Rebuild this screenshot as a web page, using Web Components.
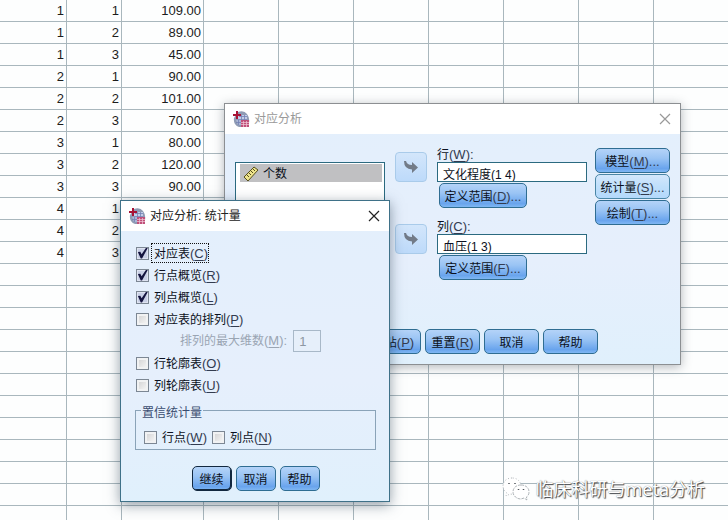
<!DOCTYPE html>
<html lang="zh-CN">
<head>
<meta charset="utf-8">
<meta name="viewport" content="width=device-width, initial-scale=1">
<title>对应分析</title>
<style>
    html, body {
        margin: 0;
        height: 100%;
        overflow: hidden;
    }
    body {
        position: relative;
        background: #fdfefe;
        color: #0b1020;
        font: 12px/14px "Liberation Sans", "Noto Sans CJK SC", sans-serif;
    }
    #main-dialog {
        position: absolute;
        left: 224px;
        top: 103px;
        width: 457px;
    }
    #stats-dialog {
        position: absolute;
        left: 120px;
        top: 200px;
        width: 270px;
    }
    page-credit {
        position: absolute;
        right: 23px;
        bottom: 18px;
    }
</style>
</head>
<body>
<data-sheet></data-sheet>

<app-dialog id="main-dialog" heading="对应分析" inactive>
    <analysis-form></analysis-form>
</app-dialog>

<app-dialog id="stats-dialog" heading="对应分析: 统计量">
    <statistics-form></statistics-form>
</app-dialog>

<page-credit>临床科研与meta分析</page-credit>

<script>
// "(C)" with the shortcut letter underlined
const accessKey = (key, tail = '') =>
    key ? `<span class="key">(<u>${key}</u>)${tail}</span>` : '';

const BASE = `
    *, *::before { box-sizing: border-box; }
    .key { font-size: 13px; color: #333c50; }
    .key u { text-decoration: underline; text-underline-offset: 2px; }
`;

class DataSheet extends HTMLElement {
    constructor() {
        super();
        this.attachShadow({ mode: 'open' });
    }

    connectedCallback() {
        const counts = [109, 89, 45, 90, 101, 70, 80, 120, 90];
        const filledRows = 12;
        const emptyCols = 8;
        let rows = '';

        for (let i = 0; i < 24; i++) {
            let cells = ['', '', ''];
            if (i < filledRows) {
                const count = i < counts.length ? counts[i].toFixed(2) : '';
                cells = [Math.floor(i / 3) + 1, i % 3 + 1, count];
            }
            rows += '<tr>' + cells.map(c => `<td>${c}</td>`).join('') + '<td></td>'.repeat(emptyCols) + '</tr>';
        }

        this.shadowRoot.innerHTML = `
            <style>
                :host { display: block; height: 100%; overflow: hidden; }
                table {
                    table-layout: fixed;
                    width: 804px;
                    min-width: 100%;
                    border-collapse: separate;
                    border-spacing: 0;
                    font-size: 13px;
                    color: #1c1c1c;
                }
                td {
                    box-sizing: border-box;
                    height: 22px;
                    padding: 1px 2px 0 0;
                    border-right: 1px solid #a9b7bd;
                    border-bottom: 1px solid #a9b7bd;
                    text-align: right;
                }
            </style>
            <table>
                <colgroup>
                    <col style="width: 67px"><col style="width: 55px"><col style="width: 82px">
                    <col span="${emptyCols}" style="width: 75px">
                </colgroup>
                <tbody>${rows}</tbody>
            </table>
        `;
    }
}
customElements.define('data-sheet', DataSheet);

class AppDialog extends HTMLElement {
    constructor() {
        super();
        this.attachShadow({ mode: 'open' });
    }

    connectedCallback() {
        this.shadowRoot.innerHTML = `
            <style>
                ${BASE}
                :host {
                    display: block;
                    box-sizing: border-box;
                    border: 1px solid #3f7188;
                    background: linear-gradient(#e3effc, #e6effc 60%, #e0f0fc);
                    box-shadow: 0 3px 12px rgba(40, 60, 80, .5);
                }
                :host([inactive]) {
                    border-color: #8c8f92;
                    box-shadow: 0 2px 10px rgba(40, 50, 60, .35);
                }
                header {
                    display: flex;
                    align-items: center;
                    gap: 4px;
                    height: 30px;
                    padding: 0 8px;
                    background: #fff;
                    color: #222;
                }
                :host([inactive]) header { color: #999; }
                h1 { flex: 1; margin: 0; font-size: 12px; font-weight: normal; }
                .logo { width: 17px; height: 17px; }
                button {
                    width: 14px;
                    height: 14px;
                    padding: 0;
                    border: 0;
                    background: none;
                    color: inherit;
                }
                button svg { display: block; }
            </style>
            <header>
                <svg class="logo" viewBox="0 0 17 17">
                    <path d="M5 1Q11-1 14 3Q17 7 16 12L15 16H6Q0 14 1 7Z" fill="#8f9bb4"/>
                    <path d="M5 4H14V10H5Z" fill="#c3cde8"/>
                    <path d="M3 9H8V14H5Z" fill="#a9b5d6"/>
                    <path d="M6 5.500H14M6 8.500H14M3 11.500H8M8.500 4V10M11.500 4V9M5.500 8V14" stroke="#7482b4" stroke-width=".8" fill="none"/>
                    <path d="M8 9H16V16H8Z" fill="#c0507a"/>
                    <path d="M8 11.500H16M8 13.500H16M10.500 10V16M13.500 10V16" stroke="#f0c7d7" stroke-width=".7"/>
                    <path d="M4 0V8M0 4H8" stroke="#a81335" stroke-width="2"/>
                </svg>
                <h1>${this.getAttribute('heading')}</h1>
                <button type="button" aria-label="关闭">
                    <svg width="14" height="14" viewBox="0 0 14 14">
                        <path d="M2 2L12 12M12 2L2 12" stroke="currentColor" stroke-width="1.200"/>
                    </svg>
                </button>
            </header>
            <slot></slot>
        `;
    }
}
customElements.define('app-dialog', AppDialog);

class PushButton extends HTMLElement {
    constructor() {
        super();
        this.attachShadow({ mode: 'open' });
    }

    connectedCallback() {
        const key = this.getAttribute('key');
        const tail = this.hasAttribute('more') ? '...' : '';
        this.shadowRoot.innerHTML = `
            <style>
                ${BASE}
                :host { display: block; }
                button {
                    width: 100%;
                    height: 25px;
                    padding: 2px 0 0;
                    border: 1px solid #2f6d92;
                    border-radius: 5px;
                    background: linear-gradient(#b4d3f8, #9ac4f4 40%, #69a4ed 85%, #7fb7f3);
                    color: inherit;
                    font: inherit;
                    white-space: nowrap;
                }
                :host([hot]) button {
                    background: linear-gradient(#d3e7fc, #bfdffb 50%, #b4d9fb);
                    border-color: #4a86a6;
                }
                :host([primary]) button {
                    border-color: #12283f;
                    box-shadow: inset -1px -1px #12283f;
                }
            </style>
            <button type="button"><slot></slot>${accessKey(key, tail)}</button>
        `;
    }
}
customElements.define('push-button', PushButton);

class MoveButton extends HTMLElement {
    constructor() {
        super();
        this.attachShadow({ mode: 'open' });
        this.shadowRoot.innerHTML = `
            <style>
                :host { display: block; }
                button {
                    display: grid;
                    place-items: center;
                    box-sizing: border-box;
                    width: 32px;
                    height: 30px;
                    padding: 0;
                    border: 1px solid #a9cbea;
                    border-radius: 4px;
                    background: linear-gradient(#d3e6fb, #bddafa);
                }
            </style>
            <button type="button" disabled aria-label="移动">
                <svg width="16" height="14" viewBox="0 0 16 14">
                    <path d="M1 1H3Q4 5 9 5V2L15 7.500L9 13V9.500Q1 9 1 1Z" fill="#727b88"/>
                </svg>
            </button>
        `;
    }
}
customElements.define('move-button', MoveButton);

class CheckBox extends HTMLElement {
    constructor() {
        super();
        this.attachShadow({ mode: 'open' });
    }

    connectedCallback() {
        const checked = this.hasAttribute('checked') ? 'checked' : '';
        this.shadowRoot.innerHTML = `
            <style>
                ${BASE}
                :host { display: block; }
                label { display: flex; align-items: center; gap: 2px; height: 22px; }
                input {
                    appearance: none;
                    width: 13px;
                    height: 13px;
                    margin: 0;
                    border: 1px solid #7c8794;
                    background: linear-gradient(135deg, #cfcfd0, #fafafa);
                    box-shadow: inset 0 0 0 2px #f1f2f3;
                }
                input:checked {
                    background: #c9d0e6;
                    box-shadow: inset 0 0 0 1px #dfe4f2;
                }
                input:checked::before {
                    content: "";
                    display: block;
                    width: 11px;
                    height: 11px;
                    background: #14143f;
                    clip-path: polygon(8% 42%, 30% 38%, 42% 62%, 84% 0, 100% 0, 46% 100%, 34% 100%);
                }
                .text { padding: 3px 0 1px 2px; border: 1px dotted transparent; }
                :host([focused]) .text { border-color: #111; }
            </style>
            <label>
                <input type="checkbox" ${checked}>
                <span class="text"><slot></slot>${accessKey(this.getAttribute('key'))}</span>
            </label>
        `;
    }
}
customElements.define('check-box', CheckBox);

class RangeField extends HTMLElement {
    constructor() {
        super();
        this.attachShadow({ mode: 'open' });
    }

    connectedCallback() {
        this.shadowRoot.innerHTML = `
            <style>
                ${BASE}
                :host { display: block; }
                label { display: block; height: 14px; }
                input {
                    display: block;
                    width: 100%;
                    height: 20px;
                    margin: 0 0 1px;
                    padding: 2px 5px 0;
                    border: 1px solid #2b6a80;
                    border-radius: 0;
                    background: #fff;
                    color: inherit;
                    font: inherit;
                }
                push-button { width: 88px; margin-left: 2px; }
            </style>
            <label for="value">${this.getAttribute('label')}${accessKey(this.getAttribute('key'), ':')}</label>
            <input id="value" type="text" readonly value="${this.getAttribute('value')}">
            <push-button key="${this.getAttribute('define-key')}" more>定义范围</push-button>
        `;
    }
}
customElements.define('range-field', RangeField);

class VariableList extends HTMLElement {
    constructor() {
        super();
        this.attachShadow({ mode: 'open' });
        this.shadowRoot.innerHTML = `
            <style>
                :host {
                    display: block;
                    box-sizing: border-box;
                    padding: 1px 2px 1px 4px;
                    border: 1px solid #2b6a80;
                    background: #fff;
                }
                ul { margin: 0; padding: 0; list-style: none; }
                li {
                    display: flex;
                    align-items: center;
                    gap: 4px;
                    height: 18px;
                    padding: 2px 3px 0;
                    box-sizing: border-box;
                    background: #c0c0c2;
                }
            </style>
            <ul>
                <li>
                    <svg width="16" height="16" viewBox="0 0 16 16">
                        <path d="M1 11L11 1L15 4L5 15Z" fill="#eee48c" stroke="#57501c"/>
                        <path d="M4 9L6 11M6 7L8 9M8 5L10 7M10 3L12 5" stroke="#57501c" fill="none"/>
                    </svg>
                    <slot></slot>
                </li>
            </ul>
        `;
    }
}
customElements.define('variable-list', VariableList);

class AnalysisForm extends HTMLElement {
    constructor() {
        super();
        this.attachShadow({ mode: 'open' });
        this.shadowRoot.innerHTML = `
            <style>
                :host { display: block; padding: 14px 10px 10px; }
                .main {
                    display: grid;
                    grid-template-columns: 150px 34px 1fr 75px;
                    column-gap: 8px;
                }
                variable-list { margin-top: 14px; }
                .moves { display: grid; justify-items: end; align-content: start; gap: 42px; padding-top: 4px; }
                .fields { display: grid; gap: 12px; padding-left: 2px; }
                .side { display: grid; align-content: start; gap: 1px; }
                footer { display: flex; justify-content: center; gap: 4px; margin-top: 49px; }
                footer push-button { width: 55px; }
            </style>
            <div class="main">
                <variable-list>个数</variable-list>
                <div class="moves">
                    <move-button></move-button>
                    <move-button></move-button>
                </div>
                <div class="fields">
                    <range-field label="行" key="W" value="文化程度(1 4)" define-key="D"></range-field>
                    <range-field label="列" key="C" value="血压(1 3)" define-key="F"></range-field>
                </div>
                <div class="side">
                    <push-button key="M" more>模型</push-button>
                    <push-button key="S" more hot>统计量</push-button>
                    <push-button key="T" more>绘制</push-button>
                </div>
            </div>
            <footer>
                <push-button>确定</push-button>
                <push-button key="P">粘贴</push-button>
                <push-button key="R">重置</push-button>
                <push-button>取消</push-button>
                <push-button>帮助</push-button>
            </footer>
        `;
    }
}
customElements.define('analysis-form', AnalysisForm);

class StatisticsForm extends HTMLElement {
    constructor() {
        super();
        this.attachShadow({ mode: 'open' });
        this.shadowRoot.innerHTML = `
            <style>
                ${BASE}
                :host { display: block; padding: 11px 13px 10px 14px; }
                .options { padding-left: 1px; }
                .dimension {
                    display: flex;
                    align-items: center;
                    gap: 6px;
                    height: 22px;
                    padding-left: 44px;
                    color: #9aa5b3;
                }
                .dimension .key { color: inherit; }
                .dimension input {
                    width: 28px;
                    height: 22px;
                    padding: 1px 5px 0;
                    border: 1px solid #a8b8c8;
                    background: #e6effa;
                    color: #8d97a3;
                    font: inherit;
                    font-size: 13px;
                }
                fieldset {
                    display: flex;
                    gap: 4px;
                    margin: 5px 0 0;
                    padding: 6px 8px 1px;
                    border: 1px solid #8aa3b8;
                }
                legend { padding: 5px 1px 0; margin-left: -3px; color: #3b4d70; }
                footer { display: flex; justify-content: center; gap: 4px; margin-top: 16px; }
                footer push-button { width: 40px; }
            </style>
            <div class="options">
                <check-box key="C" checked focused>对应表</check-box>
                <check-box key="R" checked>行点概览</check-box>
                <check-box key="L" checked>列点概览</check-box>
                <check-box key="P">对应表的排列</check-box>
                <div class="dimension">
                    <label for="dims">排列的最大维数${accessKey('M', ':')}</label>
                    <input id="dims" type="text" value="1" disabled>
                </div>
                <check-box key="O">行轮廓表</check-box>
                <check-box key="U">列轮廓表</check-box>
            </div>
            <fieldset>
                <legend>置信统计量</legend>
                <check-box key="W">行点</check-box>
                <check-box key="N">列点</check-box>
            </fieldset>
            <footer>
                <push-button primary>继续</push-button>
                <push-button>取消</push-button>
                <push-button>帮助</push-button>
            </footer>
        `;
    }
}
customElements.define('statistics-form', StatisticsForm);

class PageCredit extends HTMLElement {
    constructor() {
        super();
        this.attachShadow({ mode: 'open' });
        this.shadowRoot.innerHTML = `
            <style>
                :host {
                    display: flex;
                    align-items: center;
                    gap: 5px;
                    color: #fff;
                    font: 18px/26px "Noto Sans", "Noto Sans CJK SC", sans-serif;
                    text-shadow: 1px 1px 1px #3a3f44, 0 0 1px #70777c;
                }
            </style>
            <svg width="28" height="24" viewBox="0 0 28 24" fill="#fff" stroke="#9aa1a6" stroke-width=".8">
                <path d="M10 1C4 1 1 5 1 9Q1 13 5 16L4 19L8 17Q14 18 17 15Q20 12 19 8Q17 1 10 1Z" stroke-dasharray="1 2"/>
                <path d="M19 8C14 8 11 11 11 15C11 19 15 22 19 22L22 21L25 23L24.500 20Q27 18 27 15C27 11 24 8 19 8Z" stroke-dasharray="3 1"/>
                <path d="M7 6V7M13 6V7M16.500 12V13M21.500 12V13" stroke="#50565b" stroke-width="1.500"/>
            </svg>
            <slot></slot>
        `;
    }
}
customElements.define('page-credit', PageCredit);
</script>
</body>
</html>
